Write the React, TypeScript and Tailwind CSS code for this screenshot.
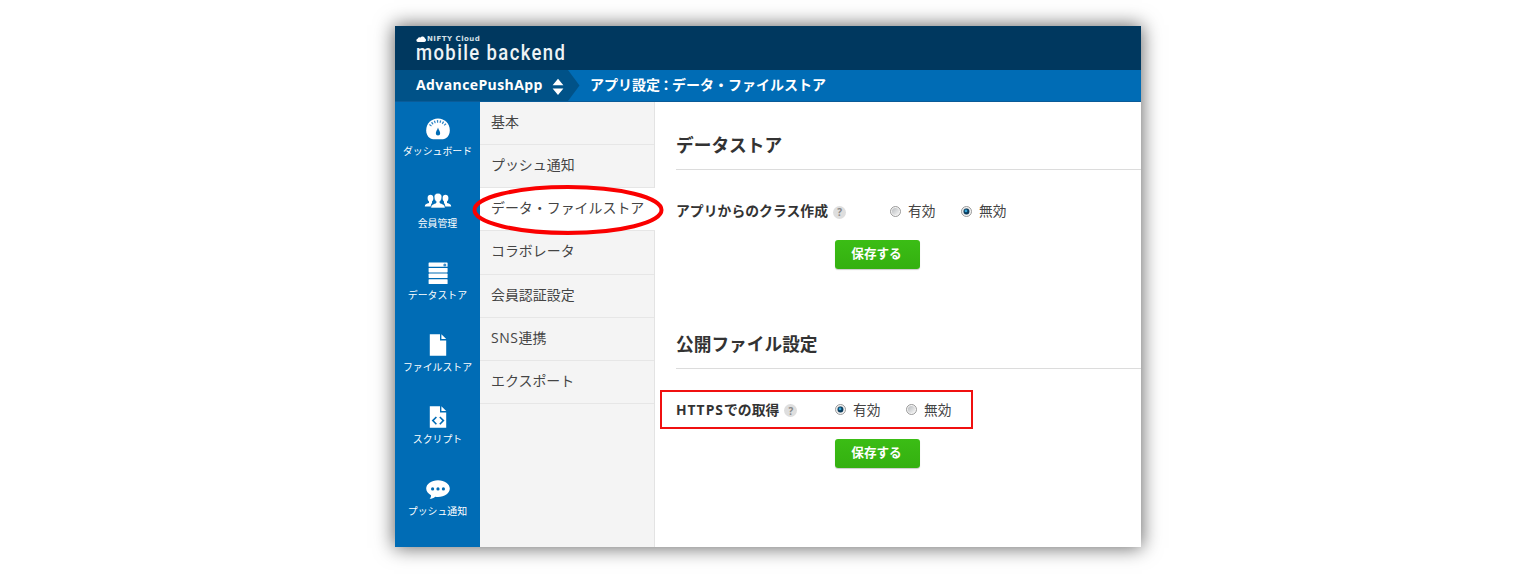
import type { ReactNode } from 'react';

function GaugeIcon() {
  return (
    <svg width="24" height="24" viewBox="0 0 24 24">
      <path d="M4.6 21.6 C1.2 19.4 .2 16.2 .2 13.4 C.2 6.6 5.4 1.6 12 1.6 S23.8 6.6 23.8 13.4 C23.8 16.2 22.8 19.4 19.4 21.6 C18.6 22.1 17.6 22.2 16.8 22.2 H7.2 C6.4 22.2 5.4 22.1 4.6 21.6Z" fill="#fff" />
      <path d="M4.1 9.3 A9.4 9.4 0 0 1 19.9 9.3" transform="translate(0 -.6)" fill="none" stroke="#2f86c6" strokeWidth="2.6" strokeDasharray="1.2 1.55" />
      <path d="M12 10.5 C12.6 13 14.2 14.4 14.2 16.2 A2.2 2.2 0 0 1 9.8 16.2 C9.8 14.4 11.4 13 12 10.5Z" fill="#006cb5" />
    </svg>
  );
}

function MembersIcon() {
  return (
    <svg width="28" height="24" viewBox="0 0 28 24" className="mt-[3px]">
      <g fill="#fff">
        <path d="M.8 16.4 C.8 14.4 2.4 13.9 5 13.1 V11.6 C3.9 10.6 3.6 9.4 3.6 7.7 C3.6 5.7 4.9 4.7 6.5 4.7 S9.4 5.7 9.4 7.7 C9.4 9.4 9.1 10.6 8 11.6 V13 C7.2 13.8 6.8 14.8 6.8 16.4Z" />
        <path d="M27.2 16.4 C27.2 14.4 25.6 13.9 23 13.1 V11.6 C24.1 10.6 24.4 9.4 24.4 7.7 C24.4 5.7 23.1 4.7 21.5 4.7 S18.6 5.7 18.6 7.7 C18.6 9.4 18.9 10.6 20 11.6 V13 C20.8 13.8 21.2 14.8 21.2 16.4Z" />
        <path d="M6.9 17.9 C6.9 14.8 8.6 14.3 12.1 12.9 V11.4 C10.6 10.2 10.2 8.6 10.2 6.7 C10.2 4.5 11.8 3.2 14 3.2 S17.8 4.5 17.8 6.7 C17.8 8.6 17.4 10.2 15.9 11.4 V12.9 C19.4 14.3 21.1 14.8 21.1 17.9Z" stroke="#006cb5" strokeWidth=".5" />
      </g>
    </svg>
  );
}

function StoreIcon() {
  return (
    <svg width="20" height="24" viewBox="0 0 20 24">
      <g fill="#fff">
        <rect x=".6" y="1.5" width="19" height="4.3" rx=".6" />
        <rect x=".6" y="7" width="19" height="4.4" rx=".6" />
        <rect x=".6" y="12.6" width="19" height="4.4" rx=".6" />
        <rect x=".6" y="18.2" width="19" height="4.8" rx=".6" />
      </g>
      <circle cx="16.8" cy="4" r="1.5" fill="#3a8ecb" />
    </svg>
  );
}

function FileIcon({ code = false }: { code?: boolean }) {
  return (
    <svg width="18" height="24" viewBox="0 0 18 24">
      <path d="M.8 1.2 H11 V7.4 H17.2 V22.8 H.8Z M12.4 1.2 L17.2 6 H12.4Z" fill="#fff" />
      {code && (
        <path d="M7.4 12 L3.8 15.6 L7.4 19.2 M10.8 12 L14.4 15.6 L10.8 19.2" fill="none" stroke="#006cb5" strokeWidth="1.6" />
      )}
    </svg>
  );
}

function ChatIcon() {
  return (
    <svg width="24" height="24" viewBox="0 0 24 24">
      <path d="M12 3.2 C18.6 3.2 23.8 6.8 23.8 11.6 S18.6 20 12 20 C11 20 10.2 19.9 9.2 19.7 C7.6 21 5.8 21.8 3.6 21.8 C4.7 20.8 5.1 19.6 5 18.2 C2 16.8 .2 14.4 .2 11.6 C.2 6.8 5.4 3.2 12 3.2Z" fill="#fff" />
      <g fill="#006cb5">
        <circle cx="6.6" cy="11.9" r="1.6" />
        <circle cx="12" cy="11.9" r="1.6" />
        <circle cx="17.4" cy="11.9" r="1.6" />
      </g>
    </svg>
  );
}

const nav: { label: string; icon: ReactNode }[] = [
  { label: 'ダッシュボード', icon: <GaugeIcon /> },
  { label: '会員管理', icon: <MembersIcon /> },
  { label: 'データストア', icon: <StoreIcon /> },
  { label: 'ファイルストア', icon: <FileIcon /> },
  { label: 'スクリプト', icon: <FileIcon code /> },
  { label: 'プッシュ通知', icon: <ChatIcon /> },
];

const menu: ReactNode[] = [
  '基本',
  'プッシュ通知',
  'データ・ファイルストア',
  'コラボレータ',
  '会員認証設定',
  <><span className="tracking-[0.6px]">SNS</span>連携</>,
  'エクスポート',
];

function Radio({ label, checked }: { label: string; checked: boolean }) {
  return (
    <label className="flex w-[71px] shrink-0 items-center gap-[7px] text-[13.7px] text-[#444]">
      <svg width="11" height="11" viewBox="0 0 11 11" className="mt-px shrink-0">
        <defs>
          <linearGradient id="ring" x1="0" y1="0" x2="1" y2="1">
            <stop offset="0" stopColor="#b9bcbf" />
            <stop offset="1" stopColor="#f5f5f5" />
          </linearGradient>
        </defs>
        <circle cx="5.5" cy="5.5" r="5" fill="#f4f4f4" stroke="#8e8f8f" strokeWidth=".9" />
        <circle cx="5.5" cy="5.5" r="3.6" fill="url(#ring)" />
        {checked && <circle cx="5.5" cy="5.5" r="2.9" fill="#0b3c5d" />}
        {checked && <circle cx="5" cy="4.9" r="1.4" fill="#35a5d8" />}
      </svg>
      {label}
    </label>
  );
}

function Help() {
  return (
    <span className="mt-[2px] ml-[5px] flex size-[13px] items-center justify-center rounded-full bg-[#dedede] font-['Open_Sans',sans-serif] text-[10px] leading-none font-bold text-[#888]">
      ?
    </span>
  );
}

function SaveButton() {
  return (
    <button className="ml-[159px] flex h-[29px] w-[85px] items-center justify-center rounded-[3px] bg-linear-to-b from-[#3bbd15] to-[#34b010] pr-[2px] pb-px text-[12.6px] leading-none font-bold text-white shadow-[0_1px_1px_rgba(0,0,0,0.2)]">
      保存する
    </button>
  );
}

function Heading({ children }: { children: ReactNode }) {
  return (
    <h2 className="flex h-[49px] items-center border-b border-[#dcdcdc] pt-px text-[17.7px] leading-none font-bold text-[#333]">
      {children}
    </h2>
  );
}

export default function App() {
  return (
    <div className="h-[574px] w-full overflow-hidden bg-white pt-[26px] pl-[395px] font-['Open_Sans','Noto_Sans_CJK_JP',sans-serif]">
      <div className="flex h-[521px] w-[746px] flex-col bg-white shadow-[0_0_18px_1px_rgba(0,0,0,0.6)]">
        <header className="flex h-[44px] shrink-0 flex-col bg-[#00385f] pt-[9px] pl-[21px] text-white">
          <div className="flex h-[8px] items-center gap-[1px]">
            <svg width="10" height="6" viewBox="0 0 10 6">
              <path d="M1.8 6 A1.7 1.7 0 0 1 1.6 2.7 A2 2 0 0 1 4.4 1.5 A2.6 2.6 0 0 1 9 2.6 A1.8 1.8 0 0 1 8.4 6Z" fill="#fff" />
            </svg>
            <span className="font-['DejaVu_Sans',sans-serif] text-[7px] leading-none font-bold tracking-[0.5px] text-[#d5e0e8]">NIFTY Cloud</span>
          </div>
          <div className="-mt-px h-[22px] w-fit origin-left scale-x-[0.84] font-['Roboto',sans-serif] text-[22px] leading-[22px] font-medium tracking-[1.65px] whitespace-nowrap text-[#eef3f6]">
            mobile backend
          </div>
        </header>

        <div className="flex h-[31.5px] shrink-0 border-b border-[#0a5b98] bg-[#006cb5] text-[14px] leading-none font-bold whitespace-nowrap text-white">
          <div className="flex w-[173px] items-center bg-[#005288] pl-[21px]">
            <span className="w-[136px] tracking-[0.4px]">AdvancePushApp</span>
            <svg width="12" height="18" viewBox="0 0 12 18" className="mt-[3px]">
              <path d="M6 .8 L11.4 7.3 H.6Z M.6 10.6 H11.4 L6 17Z" fill="#fff" />
            </svg>
          </div>
          <svg width="12" height="31" viewBox="0 0 12 31">
            <path d="M0 0 L11.5 15.5 L0 31Z" fill="#005288" />
          </svg>
          <div className="flex items-center pb-[1px] pl-[10px]">
            アプリ設定<span className="-ml-px -mr-px">：</span>データ・ファイルストア
          </div>
        </div>

        <div className="flex min-h-0 flex-1">
          <nav className="flex w-[85px] shrink-0 flex-col bg-[#006cb5] pt-[15px]">
            {nav.map((item) => (
              <div key={item.label} className="flex h-[72.2px] shrink-0 flex-col items-center text-[9.9px] leading-[12px] whitespace-nowrap text-white last:h-[40px]">
                <div className="flex h-6 items-center">{item.icon}</div>
                <div className="mt-[4px]">{item.label}</div>
              </div>
            ))}
          </nav>

          <aside className="relative flex w-[175px] shrink-0 flex-col border-r border-[#e3e3e3] bg-[#f4f4f4]">
            {menu.map((item, i) => (
              <div
                key={i}
                className={`flex h-[43.25px] shrink-0 items-center border-b border-[#e6e6e6] pl-[11px] text-[13.95px] leading-none whitespace-nowrap text-[#444] ${i === 2 ? '-mr-px bg-white' : ''}`}
              >
                <span className="-mt-[2px]">{item}</span>
              </div>
            ))}
            <svg width="192" height="52" viewBox="0 0 192 52" className="absolute top-[82px] left-[-8px]">
              <ellipse cx="96" cy="26" rx="93.5" ry="23" fill="none" stroke="#fa0000" strokeWidth="4" />
            </svg>
          </aside>

          <main className="flex min-w-0 flex-1 flex-col pt-[19.5px] pl-[21px] leading-none">
            <Heading>データストア</Heading>
            <div className="mt-[31px] flex h-5 items-center">
              <div className="flex w-[214px] shrink-0 items-center text-[13.85px] font-bold whitespace-nowrap text-[#333]">
                アプリからのクラス作成
                <Help />
              </div>
              <Radio label="有効" checked={false} />
              <Radio label="無効" checked />
            </div>
            <div className="mt-[19px]">
              <SaveButton />
            </div>
            <div className="mt-[51px]">
              <Heading>公開ファイル設定</Heading>
            </div>
            <div className="mt-[21px] -ml-4 flex h-[39px] w-[313px] items-center border-2 border-[#f01010] pl-[14px]">
              <div className="flex w-[159px] shrink-0 items-center text-[13.85px] font-bold whitespace-nowrap text-[#333]">
                <span className="tracking-[1px]">HTTPS</span>での取得
                <Help />
              </div>
              <Radio label="有効" checked />
              <Radio label="無効" checked={false} />
            </div>
            <div className="mt-[10px]">
              <SaveButton />
            </div>
          </main>
        </div>
      </div>
    </div>
  );
}
